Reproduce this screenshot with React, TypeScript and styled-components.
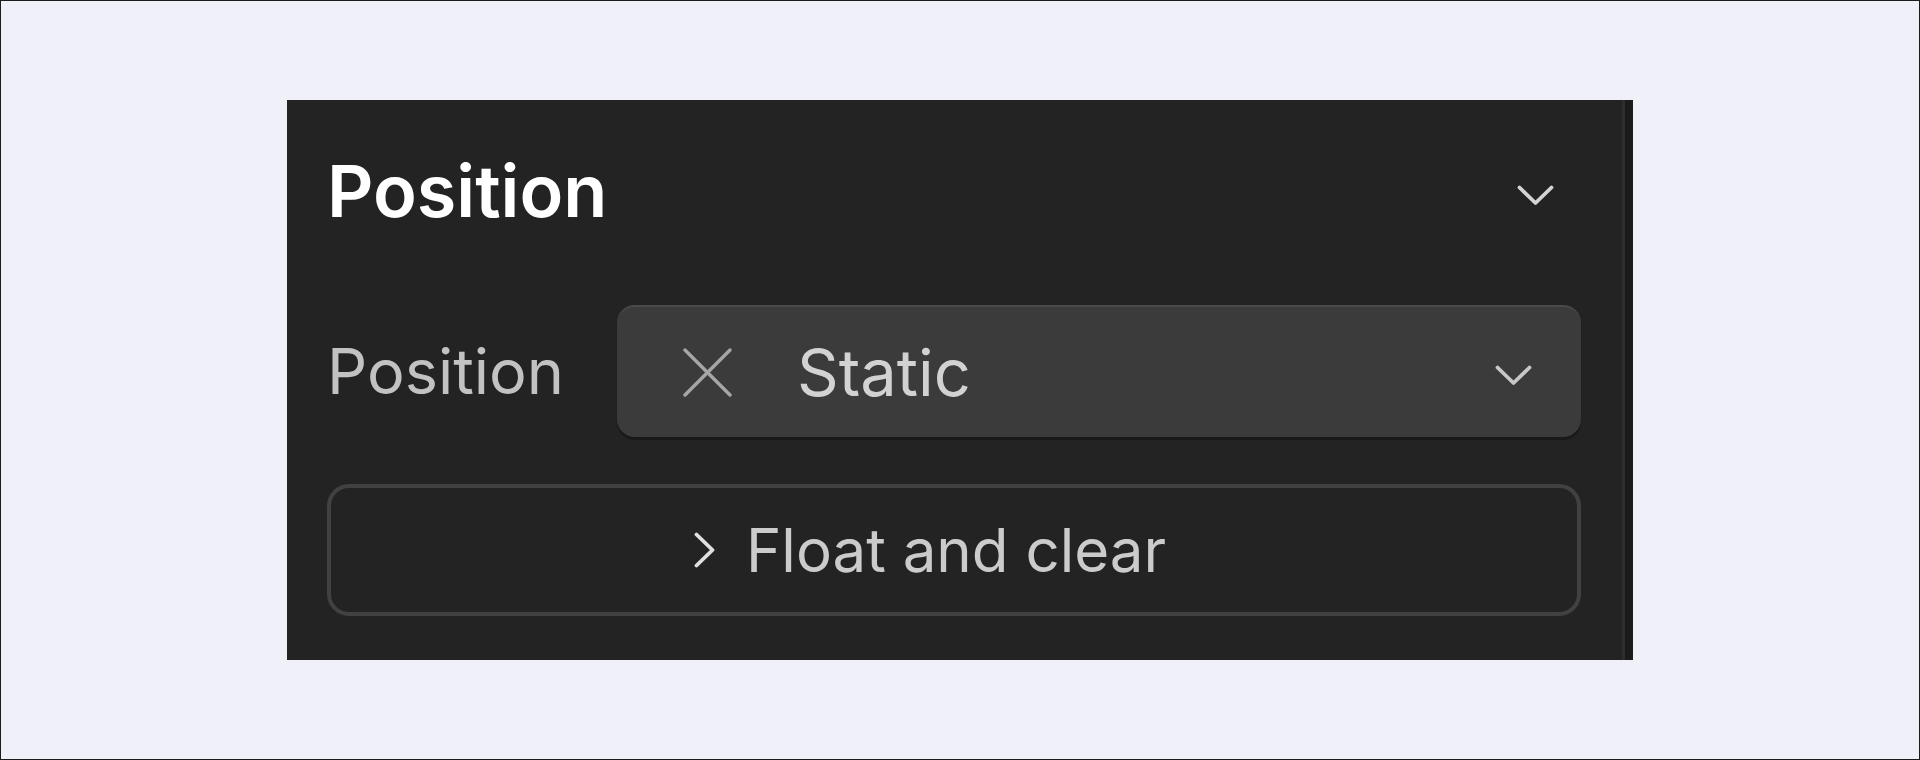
import React from "react";
import styled, { createGlobalStyle } from "styled-components";

const Global = createGlobalStyle`
  html, body { margin: 0; padding: 0; background: #f0f1f8; }
  * { box-sizing: border-box; }
`;

const Frame = styled.div`
  width: 1920px;
  height: 760px;
  border: 1px solid #1c1c1c;
  background: #f0f1f8;
  padding: 99px 0 0 286px;
  font-family: Inter, "Noto Sans", sans-serif;
`;

const Panel = styled.section`
  width: 1346px;
  display: flex;
  background: #232323;
`;

const Body = styled.div`
  flex: 1;
  padding: 55px 41px 44px 40px;
  display: flex;
  flex-direction: column;
`;

const Scrollbar = styled.div`
  width: 11px;
  border-left: 3px solid #2e2e2e;
  background: #1b1b1b;
`;

const Header = styled.header`
  display: flex;
  align-items: center;
  justify-content: space-between;
  padding-right: 27px;
`;

const Title = styled.h2`
  margin: 0;
  font-size: 72px;
  line-height: 72px;
  font-weight: 600;
  color: #ffffff;
`;

const IconSvg = styled.svg<{ $mt?: number }>`
  display: block;
  flex: none;
  margin-top: ${(p) => p.$mt ?? 0}px;
`;

const Row = styled.div`
  margin-top: 78px;
  display: grid;
  grid-template-columns: 290px 1fr;
  align-items: center;
`;

const Label = styled.span`
  font-size: 63px;
  line-height: 1;
  color: #c2c2c2;
`;

const Select = styled.div`
  height: 132px;
  border-radius: 18px;
  background: #3b3b3b;
  border-top: 2px solid #4a4a4a;
  box-shadow: 0 3px 1px #191919;
  display: flex;
  align-items: center;
  padding: 0 49px 0 66px;
`;

const Value = styled.span`
  flex: 1;
  margin-left: 65px;
  font-size: 65px;
  line-height: 1;
  color: #d2d2d2;
`;

const Disclosure = styled.button`
  margin-top: 47px;
  height: 132px;
  width: 100%;
  border: 4px solid #414141;
  border-radius: 22px;
  background: #232323;
  display: flex;
  align-items: center;
  justify-content: center;
  gap: 31px;
  padding: 0 48px 0 0;
  font-family: inherit;
  cursor: pointer;
`;

const DisclosureText = styled.span`
  font-size: 60px;
  line-height: 1;
  color: #cbcbcb;
`;

const ChevronDown = ({ color, mt }: { color: string; mt?: number }) => (
  <IconSvg $mt={mt} width="37" height="21" viewBox="0 0 37 21" fill="none">
    <path d="M2.5 2.5 L18.5 18 L34.5 2.5" stroke={color} strokeWidth="3.8" strokeLinecap="round" strokeLinejoin="round" />
  </IconSvg>
);

const CloseX = () => (
  <IconSvg width="49" height="49" viewBox="0 0 49 49" fill="none">
    <path d="M2 2 L47 47 M47 2 L2 47" stroke="#a6a6a6" strokeWidth="3.4" strokeLinecap="round" />
  </IconSvg>
);

const ChevronRight = () => (
  <IconSvg width="21" height="36" viewBox="0 0 21 36" fill="none">
    <path d="M2.5 2.5 L18.5 18 L2.5 33.5" stroke="#e0e0e0" strokeWidth="3.8" strokeLinecap="round" strokeLinejoin="round" />
  </IconSvg>
);

export default function App() {
  return (
    <>
      <Global />
      <Frame>
        <Panel>
          <Body>
            <Header>
              <Title>Position</Title>
              <ChevronDown color="#d4d4d4" mt={8} />
            </Header>
            <Row>
              <Label>Position</Label>
              <Select>
                <CloseX />
                <Value>Static</Value>
                <ChevronDown color="#c8c8c8" mt={6} />
              </Select>
            </Row>
            <Disclosure type="button">
              <ChevronRight />
              <DisclosureText>Float and clear</DisclosureText>
            </Disclosure>
          </Body>
          <Scrollbar />
        </Panel>
      </Frame>
    </>
  );
}
